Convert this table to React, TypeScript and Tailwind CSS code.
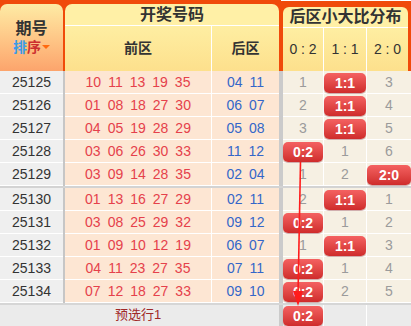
import React from 'react'

type Dist = number | string | null

interface DrawRow {
  qi: string
  front: string[]
  back: string[]
  dist: Dist[]
}

const rows: DrawRow[] = [
  { qi: '25125', front: ['10', '11', '13', '19', '35'], back: ['04', '11'], dist: [1, '1:1', 3] },
  { qi: '25126', front: ['01', '08', '18', '27', '30'], back: ['06', '07'], dist: [2, '1:1', 4] },
  { qi: '25127', front: ['04', '05', '19', '28', '29'], back: ['05', '08'], dist: [3, '1:1', 5] },
  { qi: '25128', front: ['03', '06', '26', '30', '33'], back: ['11', '12'], dist: ['0:2', 1, 6] },
  { qi: '25129', front: ['03', '09', '14', '28', '35'], back: ['02', '04'], dist: [1, 2, '2:0'] },
  { qi: '25130', front: ['01', '13', '16', '27', '29'], back: ['02', '11'], dist: [2, '1:1', 1] },
  { qi: '25131', front: ['03', '08', '25', '29', '32'], back: ['09', '12'], dist: ['0:2', 1, 2] },
  { qi: '25132', front: ['01', '09', '10', '12', '19'], back: ['06', '07'], dist: [1, '1:1', 3] },
  { qi: '25133', front: ['04', '11', '23', '27', '35'], back: ['07', '11'], dist: ['0:2', 1, 4] },
  { qi: '25134', front: ['07', '12', '18', '27', '33'], back: ['09', '10'], dist: ['0:2', 2, 5] },
]

const Badge = ({ label, top = 'mt-[2px]' }: { label: string; top?: string }) => (
  <div
    className={`${top} h-[20px] w-full rounded-[5px] bg-linear-to-b from-[#f46161] to-[#cf2b2b] text-center text-[14px] font-bold leading-[20px] text-white shadow-[0_1px_1px_rgba(110,0,0,0.35)]`}
  >
    {label}
  </div>
)

const DistCell = ({ value, cls }: { value: Dist; cls: string }) => (
  <div className={cls}>
    {typeof value === 'string' ? (
      <Badge label={value} />
    ) : (
      <div className="text-center text-[14px] leading-[22px] text-[#9b9b9b]">{value}</div>
    )}
  </div>
)

const Row = ({ row }: { row: DrawRow }) => (
  <div className="flex h-[23px]">
    <div className="w-[63px] border-b border-white bg-[#efefef] text-center text-[14px] leading-[22px] text-[#333]">
      {row.qi}
    </div>
    <div className="w-[2px] bg-[#c6c6c6]" />
    <div className="flex w-[147px] items-center justify-center gap-[7px] border-b border-r border-white bg-[#fde6d3] text-[14px] text-[#e5414b]">
      {row.front.map((n, i) => (
        <span key={'f' + i}>{n}</span>
      ))}
    </div>
    <div className="flex w-[67px] items-center justify-center gap-[7px] border-b border-white bg-[#fde6d3] text-[14px] text-[#3466c9]">
      {row.back.map((n, i) => (
        <span key={'b' + i}>{n}</span>
      ))}
    </div>
    <div className="w-[4px] bg-[#cbcbcb]" />
    <DistCell value={row.dist[0]} cls="w-[41px] border-b border-r border-white bg-[#f6f0e3]" />
    <DistCell value={row.dist[1]} cls="w-[43px] border-b border-r border-white bg-[#f6f0e3]" />
    <DistCell value={row.dist[2]} cls="flex-1 border-b border-white bg-[#f6f0e3]" />
  </div>
)

export default function App() {
  return (
    <div className="relative h-[326px] w-[411px] overflow-hidden bg-white font-['Liberation_Sans','Noto_Sans_CJK_SC',sans-serif]">
      {/* header */}
      <div className="flex h-[71px] bg-[#f04a0a]">
        <div className="mt-[4px] flex h-[67px] w-[63px] flex-col items-center justify-center rounded-t-[7px] bg-linear-to-b from-[#fdeba4] to-[#fca46c]">
          <div className="text-[16px] font-bold leading-[18px] text-[#333]">期号</div>
          <div className="flex items-center text-[14px] font-bold leading-[18px]">
            <span className="text-[#3a9be8]">排</span>
            <span className="text-[#cc3030]">序</span>
            <span className="ml-[1px] mt-[1px] h-0 w-0 border-x-[4px] border-t-[4px] border-x-transparent border-t-[#ff6a10]" />
          </div>
        </div>
        <div className="ml-[2px] mt-[4px] flex w-[214px] flex-col overflow-hidden rounded-t-[7px]">
          <div className="h-[22px] border-b border-white bg-[#fff0a6] text-center text-[16px] font-bold leading-[21px] text-[#333]">
            开奖号码
          </div>
          <div className="flex h-[45px] bg-linear-to-b from-[#feeea2] to-[#fde08c]">
            <div className="flex w-[147px] items-center justify-center border-r border-white text-[14px] font-bold text-[#333]">
              前区
            </div>
            <div className="flex flex-1 items-center justify-center text-[14px] font-bold text-[#333]">后区</div>
          </div>
        </div>
        <div className="flex w-[132px] flex-col">
          <div className="ml-[2px] h-[1px] bg-white" />
          <div className="ml-[4px] mt-[6px] flex w-[125px] flex-col overflow-hidden rounded-t-[6px]">
            <div className="h-[21px] border-b border-white bg-[#fff0a6] text-center text-[16px] font-bold leading-[20px] text-[#333]">
              后区小大比分布
            </div>
            <div className="flex h-[43px] bg-linear-to-b from-[#feeea2] to-[#fde08c] text-[14px] text-[#333]">
              <div className="flex w-[41px] items-center justify-center border-r border-white">0 : 2</div>
              <div className="flex w-[43px] items-center justify-center border-r border-white">1 : 1</div>
              <div className="flex flex-1 items-center justify-center">2 : 0</div>
            </div>
          </div>
        </div>
      </div>

      {/* body */}
      {rows.slice(0, 5).map((r) => (
        <Row key={r.qi} row={r} />
      ))}
      <div className="h-[2px] bg-[#d3d3d3]" />
      {rows.slice(5).map((r) => (
        <Row key={r.qi} row={r} />
      ))}

      {/* footer row */}
      <div className="flex h-[23px] border-t-2 border-[#d6d6d6] bg-[#ebebeb]">
        <div className="w-[279px] pr-[3px] text-center text-[13px] leading-[20px] text-[#a02828]">预选行1</div>
        <div className="w-[4px] bg-[#cbcbcb]" />
        <div className="w-[41px] border-r border-white">
          <Badge label="0:2" top="mt-[1px]" />
        </div>
        <div className="w-[43px] border-r border-white" />
        <div className="flex-1" />
      </div>

      {/* trend arrow */}
      <svg className="pointer-events-none absolute left-0 top-0" width="411" height="326">
        <line x1="300.5" y1="162" x2="298" y2="296" stroke="#ff1c1c" strokeWidth="1.6" />
        <polygon points="293,291 303,291 298,306" fill="#ff1c1c" />
      </svg>
    </div>
  )
}
